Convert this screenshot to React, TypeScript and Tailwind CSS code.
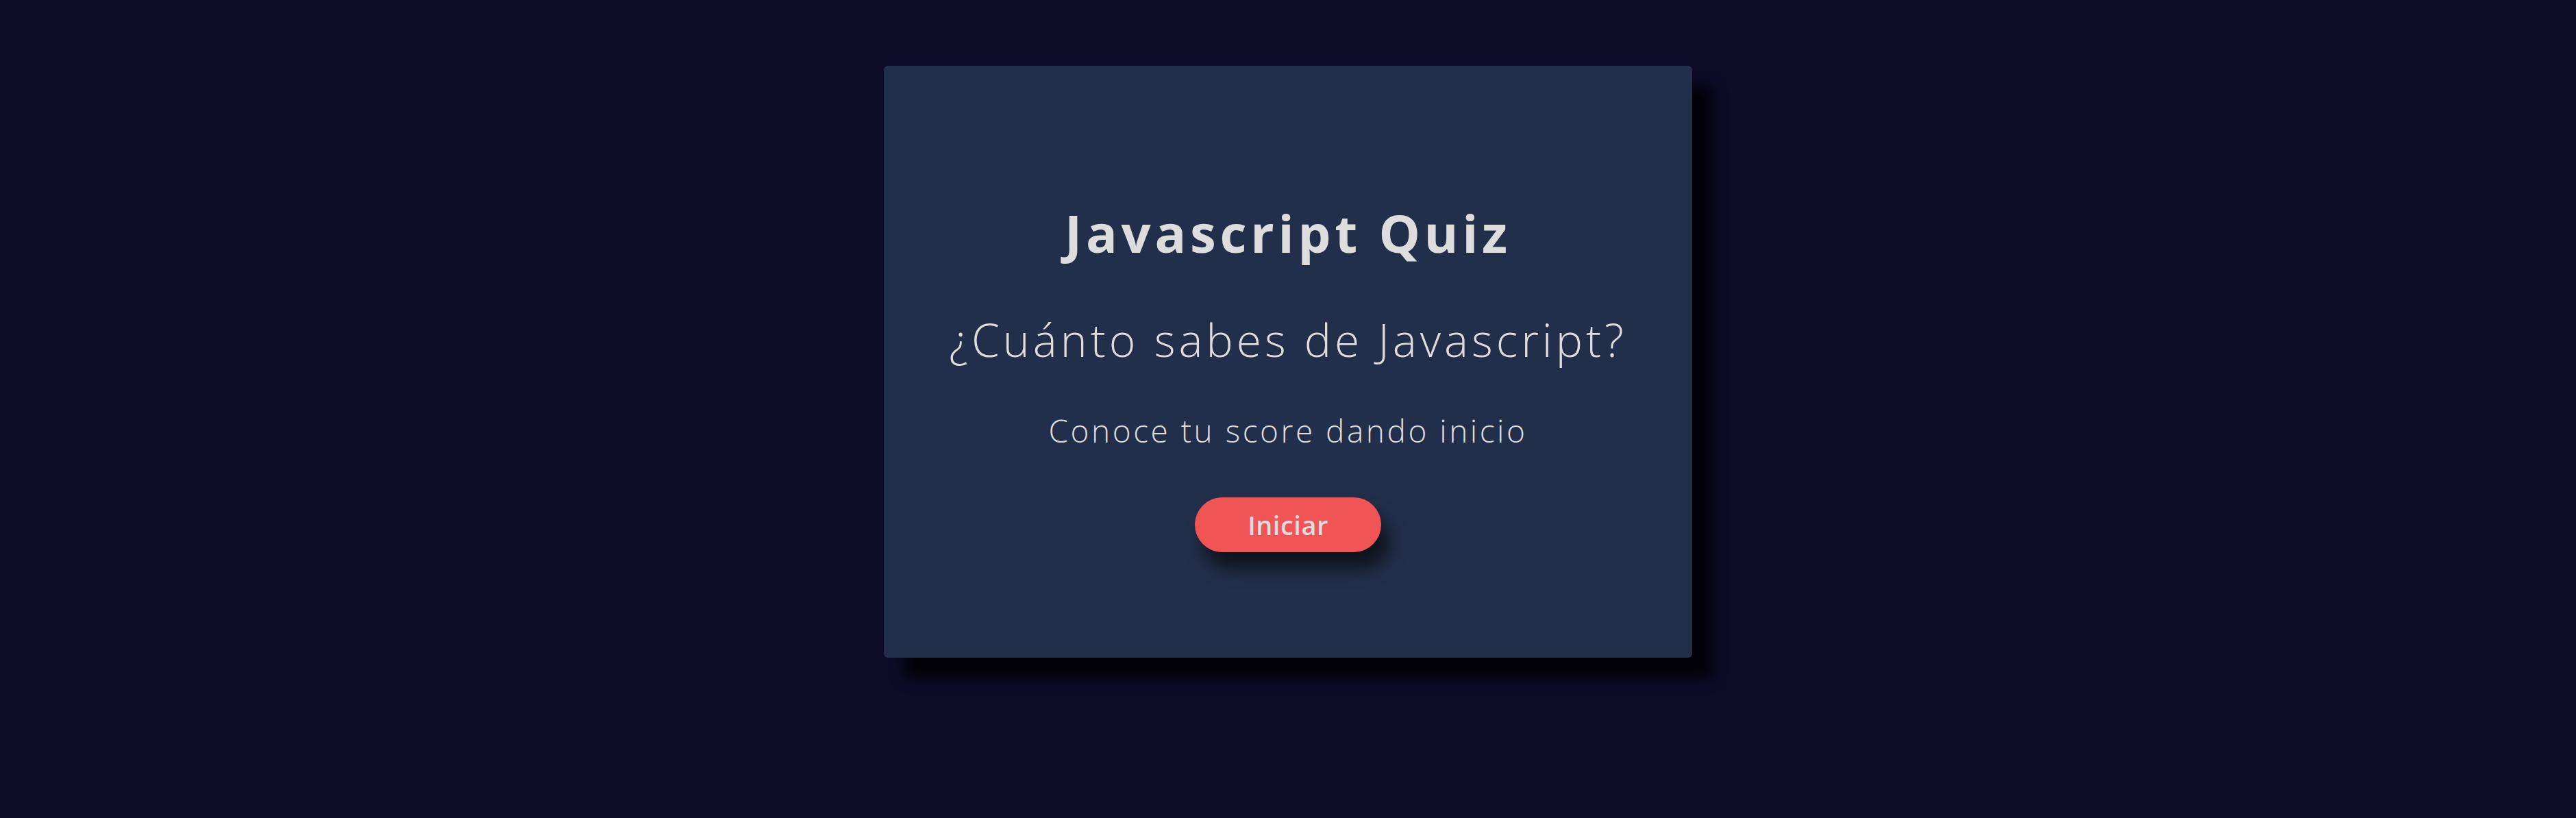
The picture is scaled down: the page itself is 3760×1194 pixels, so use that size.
export default function App() {
  return (
    <div
      className="min-h-[1194px] w-full bg-[#0e0b29] pt-[96px]"
      style={{ fontFamily: '"Open Sans", "Liberation Sans", sans-serif' }}
    >
      <div className="mx-auto flex h-[864px] w-[1180px] flex-col items-center rounded-md bg-[#222f4a] pt-[206px] text-[#dddddd] shadow-[30px_30px_20px_rgba(0,0,0,0.8)]">
        <h1 className="text-[76px] font-bold leading-none tracking-[5.7px]">
          Javascript Quiz
        </h1>
        <h2 className="mt-[84px] text-[66px] font-light leading-none tracking-[5px]">
          ¿Cuánto sabes de Javascript?
        </h2>
        <p className="mt-[77px] text-[46px] font-light leading-none tracking-[3.5px]">
          Conoce tu score dando inicio
        </p>
        <button className="mt-[75px] flex h-[80px] w-[272px] items-center justify-center rounded-full bg-[#f05454] text-[38px] font-semibold leading-none tracking-[0.5px] text-[#dddddd] shadow-[12px_24px_24px_rgba(0,0,0,0.6)]">
          Iniciar
        </button>
      </div>
    </div>
  );
}
